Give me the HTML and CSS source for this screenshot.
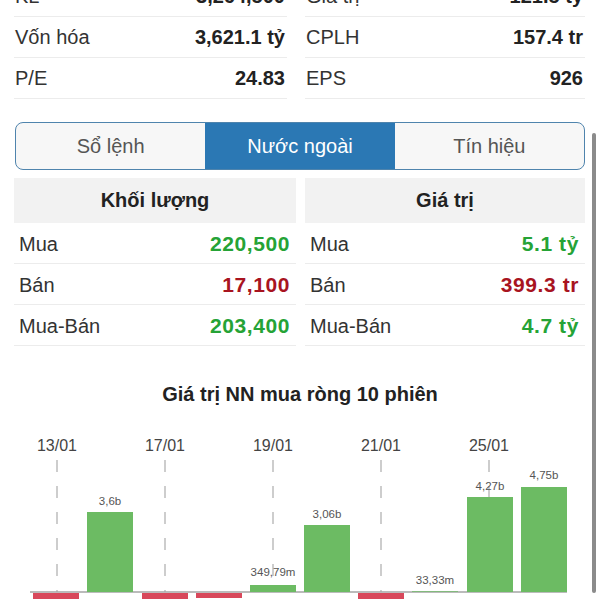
FILE: index.html
```html
<!DOCTYPE html>
<html lang="vi">
<head>
    <meta charset="UTF-8">
    <meta name="viewport" content="width=device-width, initial-scale=1.0">
    <title>Nước ngoài</title>
    <link rel="stylesheet" href="styles.css">
</head>
<body>
    <div class="screen">
        <div class="stats">
            <div class="stat"><span class="label">KL</span><span class="value">3,264,500</span></div>
            <div class="stat"><span class="label">Giá trị</span><span class="value">121.5 tỷ</span></div>
            <div class="stat"><span class="label">Vốn hóa</span><span class="value">3,621.1 tỷ</span></div>
            <div class="stat"><span class="label">CPLH</span><span class="value">157.4 tr</span></div>
            <div class="stat"><span class="label">P/E</span><span class="value">24.83</span></div>
            <div class="stat"><span class="label">EPS</span><span class="value">926</span></div>
        </div>

        <div class="tabs">
            <div class="tab">Sổ lệnh</div>
            <div class="tab active">Nước ngoài</div>
            <div class="tab">Tín hiệu</div>
        </div>

        <div class="foreign">
            <div class="col">
                <div class="col-head">Khối lượng</div>
                <div class="row"><span>Mua</span><span class="up">220,500</span></div>
                <div class="row"><span>Bán</span><span class="down">17,100</span></div>
                <div class="row"><span>Mua-Bán</span><span class="up">203,400</span></div>
            </div>
            <div class="col">
                <div class="col-head">Giá trị</div>
                <div class="row"><span>Mua</span><span class="up">5.1 tỷ</span></div>
                <div class="row"><span>Bán</span><span class="down">399.3 tr</span></div>
                <div class="row"><span>Mua-Bán</span><span class="up">4.7 tỷ</span></div>
            </div>
        </div>

        <div class="chart-title">Giá trị NN mua ròng 10 phiên</div>

        <svg class="chart" width="600" height="193" viewBox="0 0 600 193">
            <g class="dates">
                <text x="57" y="45">13/01</text>
                <text x="165" y="45">17/01</text>
                <text x="273" y="45">19/01</text>
                <text x="381" y="45">21/01</text>
                <text x="489" y="45">25/01</text>
            </g>
            <g class="guides">
                <line x1="57" y1="54" x2="57" y2="186"/>
                <line x1="165" y1="54" x2="165" y2="186"/>
                <line x1="273" y1="54" x2="273" y2="186"/>
                <line x1="381" y1="54" x2="381" y2="186"/>
                <line x1="489" y1="54" x2="489" y2="186"/>
            </g>
            <line class="axis" x1="30" y1="186" x2="567" y2="186"/>
            <g class="bars">
                <rect class="neg" x="33" y="187" width="46" height="20"/>
                <rect class="pos" x="87" y="106" width="46" height="80"/>
                <rect class="neg" x="142" y="187" width="46" height="20"/>
                <rect class="neg" x="196" y="187" width="46" height="5"/>
                <rect class="pos" x="250" y="179" width="46" height="7"/>
                <rect class="pos" x="304" y="119" width="46" height="67"/>
                <rect class="neg" x="358" y="187" width="46" height="20"/>
                <rect class="pos" x="412" y="185.3" width="46" height="0.7"/>
                <rect class="pos" x="467" y="91" width="46" height="95"/>
                <rect class="pos" x="521" y="81" width="46" height="105"/>
            </g>
            <g class="bar-labels">
                <text x="110" y="99">3,6b</text>
                <text x="273" y="170">349,79m</text>
                <text x="327" y="112">3,06b</text>
                <text x="435" y="178">33,33m</text>
                <text x="490" y="84">4,27b</text>
                <text x="544" y="73">4,75b</text>
            </g>
        </svg>

        <div class="scrollbar"></div>
    </div>
</body>
</html>
```

FILE: styles.css
```css
html, body {
    margin: 0;
    height: 600px;
    overflow: hidden;
    background: #fff;
}
body {
    font-family: "Liberation Sans", Arial, sans-serif;
    color: #2b2b2b;
}
.screen {
    position: relative;
    height: 600px;
}

/* summary numbers */
.stats {
    display: grid;
    grid-template-columns: 273px 280px;
    column-gap: 18px;
    margin-top: -24px;
    padding-left: 14px;
}
.stat {
    display: flex;
    justify-content: space-between;
    align-items: center;
    height: 40px;
    border-bottom: 1px solid #ececec;
    font-size: 20px;
    padding: 0 2px 0 1px;
}
.stat .label {
    color: #333;
}
.stat .value {
    font-weight: bold;
    color: #222;
}

/* segmented tabs */
.tabs {
    display: flex;
    box-sizing: border-box;
    margin: 23px 15px 0 15px;
    height: 48px;
    border: 1.5px solid #4f84ad;
    border-radius: 8px;
    overflow: hidden;
    background: #f7f7f7;
}
.tab {
    flex: 1;
    display: flex;
    justify-content: center;
    align-items: center;
    font-size: 20px;
    color: #555;
}
.tab.active {
    background: #2b78b4;
    color: #fff;
}

/* foreign trading */
.foreign {
    display: grid;
    grid-template-columns: 282px 280px;
    column-gap: 9px;
    margin: 8px 0 0 14px;
}
.col-head {
    height: 45px;
    display: flex;
    justify-content: center;
    align-items: center;
    background: #f2f2f2;
    font-size: 20px;
    font-weight: bold;
    color: #222;
}
.row {
    display: flex;
    justify-content: space-between;
    align-items: center;
    box-sizing: border-box;
    height: 41px;
    padding: 2px 6px 0 5px;
    border-bottom: 1px solid #ececec;
    font-size: 20px;
    color: #333;
}
.row .up,
.row .down {
    font-size: 21px;
    font-weight: bold;
    letter-spacing: 0.6px;
}
.up {
    color: #25a336;
}
.down {
    color: #a8141f;
}

/* net buy chart */
.chart-title {
    margin-top: 36px;
    line-height: 24px;
    text-align: center;
    font-size: 20px;
    font-weight: bold;
    color: #222;
}
.chart {
    display: block;
}
.dates text {
    font-size: 16px;
    fill: #444;
    text-anchor: middle;
}
.guides line {
    stroke: #bdbdbd;
    stroke-width: 1.5;
    stroke-dasharray: 12 14;
}
.axis {
    stroke: #a5a5a5;
    stroke-width: 1.5;
}
.bars .pos {
    fill: #6cbb63;
}
.bars .neg {
    fill: #d8485b;
}
.bar-labels text {
    font-size: 11.5px;
    fill: #555;
    text-anchor: middle;
}

.scrollbar {
    position: absolute;
    top: 157px;
    right: 4px;
    width: 4px;
    height: 460px;
    border-radius: 2px;
    background: #8b8b8b;
}
```
